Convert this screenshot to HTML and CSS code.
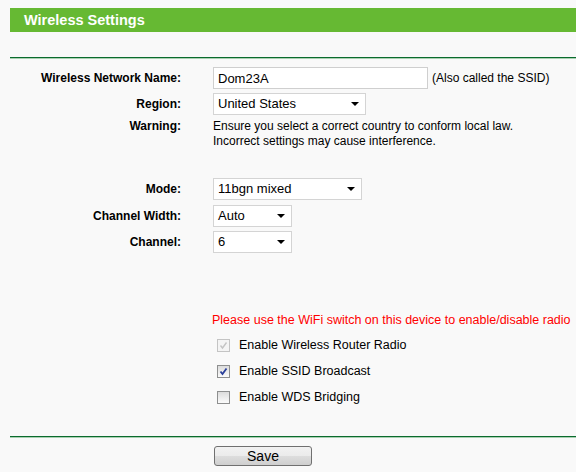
FILE: index.html
```html
<!DOCTYPE html>
<html>
<head>
<meta charset="utf-8">
<link rel="stylesheet" href="styles.css">
</head>
<body>
<div class="page">
  <div class="title">Wireless Settings</div>
  <div class="rule"></div>

  <div class="form">
    <div class="row">
      <div class="label">Wireless Network Name:</div>
      <div class="ctrl">
        <input class="text" type="text" value="Dom23A">
        <span class="hint">(Also called the SSID)</span>
      </div>
    </div>
    <div class="row r-tight">
      <div class="label">Region:</div>
      <div class="ctrl"><span class="select w-region">United States</span></div>
    </div>
    <div class="row r-tight r-top">
      <div class="label">Warning:</div>
      <div class="ctrl note">Ensure you select a correct country to conform local law.<br>Incorrect settings may cause interference.</div>
    </div>
    <div class="row r-mode">
      <div class="label">Mode:</div>
      <div class="ctrl"><span class="select w-mode">11bgn mixed</span></div>
    </div>
    <div class="row r-cw">
      <div class="label">Channel Width:</div>
      <div class="ctrl"><span class="select w-small">Auto</span></div>
    </div>
    <div class="row r-tight">
      <div class="label">Channel:</div>
      <div class="ctrl"><span class="select w-small">6</span></div>
    </div>
  </div>

  <div class="notice">Please use the WiFi switch on this device to enable/disable radio</div>

  <ul class="checks">
    <li><span class="box disabled"><svg viewBox="0 0 13 13" width="13" height="13"><path d="M3.5 6.5 L5.5 9 L9.5 3.5" fill="none" stroke="#c4c4c4" stroke-width="1.4"/></svg></span>Enable Wireless Router Radio</li>
    <li><span class="box"><svg viewBox="0 0 13 13" width="13" height="13"><path d="M3.5 6.5 L5.5 9 L9.5 3.5" fill="none" stroke="#2a3f9a" stroke-width="1.8"/></svg></span>Enable SSID Broadcast</li>
    <li><span class="box"></span>Enable WDS Bridging</li>
  </ul>

  <div class="rule rule-bottom"></div>
  <div class="actions"><button class="btn" type="button">Save</button></div>
</div>
</body>
</html>
```
FILE: styles.css
```css
html, body {
  margin: 0;
  padding: 0;
  background: #f9f9f9;
  font-family: "Liberation Sans", Arial, sans-serif;
  color: #000;
}
.page {
  padding: 8px 0 0 10px;
  width: 566px;
}
.title {
  height: 24px;
  line-height: 24px;
  background: #66b933;
  color: #fff;
  font-weight: bold;
  font-size: 14.5px;
  padding-left: 14px;
}
.rule {
  margin-top: 25px;
  height: 1px;
  background: #0b6b2e;
  border-bottom: 1px solid #a9d1b2;
}
.rule-bottom {
  margin-top: 26px;
}
.form {
  margin-top: 8px;
}
.row {
  display: flex;
  align-items: center;
  gap: 32px;
  min-height: 22px;
}
.r-tight { margin-top: 4px; }
.r-top { align-items: flex-start; }
.r-mode { margin-top: 29px; }
.r-cw { margin-top: 5px; }
.label {
  width: 171px;
  flex: none;
  text-align: right;
  font-weight: bold;
  font-size: 12px;
  line-height: 15px;
}
.ctrl {
  display: flex;
  align-items: center;
  font-size: 12px;
}
.note {
  display: block;
  line-height: 15px;
}
.text {
  box-sizing: border-box;
  width: 215px;
  height: 22px;
  margin: 0;
  padding: 0 4px;
  border: 1px solid #cfcfcf;
  background: #fff;
  font-family: "Liberation Sans", Arial, sans-serif;
  font-size: 13px;
  color: #000;
  outline: none;
}
.hint {
  margin-left: 4px;
  font-size: 12px;
}
.select {
  position: relative;
  box-sizing: border-box;
  display: block;
  height: 22px;
  line-height: 20px;
  padding-left: 4px;
  border: 1px solid #d4d4d4;
  background: #fff;
  font-size: 13px;
}
.select::after {
  content: "";
  position: absolute;
  right: 6px;
  top: 8px;
  border-left: 4px solid transparent;
  border-right: 4px solid transparent;
  border-top: 4px solid #000;
}
.w-region { width: 153px; }
.w-mode { width: 149px; }
.w-small { width: 79px; }
.notice {
  margin-top: 59px;
  padding-left: 202px;
  color: #ff0000;
  font-size: 12.5px;
  line-height: 16px;
  white-space: nowrap;
}
.checks {
  list-style: none;
  margin: 4px 0 0 0;
  padding: 0 0 0 207px;
}
.checks li {
  display: flex;
  align-items: center;
  gap: 9px;
  height: 26px;
  font-size: 12.5px;
}
.box {
  box-sizing: border-box;
  display: block;
  width: 13px;
  height: 13px;
  border: 1px solid #8e8f8f;
  background: linear-gradient(#dcdcdc, #fbfbfb);
  flex: none;
  position: relative;
}
.box svg {
  position: absolute;
  left: -1px;
  top: -1px;
}
.box.disabled {
  border-color: #c4c4c4;
  background: #f4f4f4;
}
.actions {
  padding: 8px 0 0 204px;
}
.btn {
  box-sizing: border-box;
  width: 98px;
  height: 20px;
  margin: 0;
  padding: 0;
  border: 1px solid #707070;
  border-radius: 3px;
  background: linear-gradient(#f2f2f2 0%, #ebebeb 50%, #dddddd 51%, #cfcfcf 100%);
  font-family: "Liberation Sans", Arial, sans-serif;
  font-size: 14px;
  color: #000;
  line-height: 18px;
}
```
